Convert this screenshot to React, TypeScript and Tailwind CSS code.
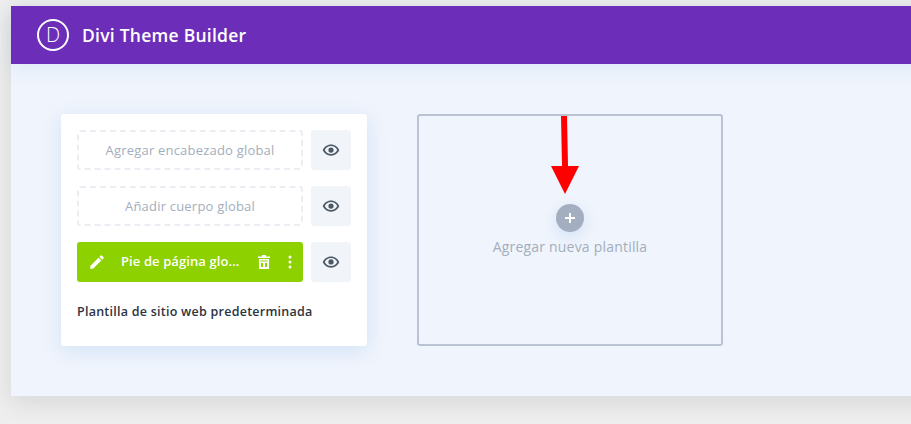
function Eye() {
  return (
    <svg width="18" height="18" viewBox="0 0 24 24" fill="#4c5866">
      <path d="M12 4.500C7 4.500 2.730 7.610 1 12c1.730 4.390 6 7.500 11 7.500s9.270-3.110 11-7.500c-1.730-4.390-6-7.500-11-7.500zM12 17.300c-3.500 0-6.700-2-8.300-5.300C5.300 8.700 8.500 6.700 12 6.700s6.700 2 8.300 5.300c-1.600 3.300-4.800 5.300-8.300 5.300zm0-8.800a3.500 3.500 0 1 0 0 7 3.500 3.500 0 0 0 0-7z" />
    </svg>
  )
}

function EyeButton() {
  return (
    <div className="flex h-10 w-10 items-center justify-center rounded-[3px] bg-[#f1f5f9]">
      <Eye />
    </div>
  )
}

function EmptySlot({ label }: { label: string }) {
  return (
    <div className="flex items-center gap-2">
      <div className="flex h-10 w-[226px] items-center justify-center rounded-[3px] border-2 border-dashed border-[#eaedf2] pt-[1px] text-[13px] font-medium tracking-[0.2px] text-[#a3aebc]">
        {label}
      </div>
      <EyeButton />
    </div>
  )
}

export default function App() {
  return (
    <div className="relative h-[424px] w-[911px] overflow-hidden bg-[#eeeeee] pt-[6px] pl-[11px] font-['Open_Sans',sans-serif]">
      <div className="h-[390px] w-[920px] rounded-tl-[3px] bg-[#f0f4fc] shadow-[0_6px_24px_rgba(0,0,0,0.1)]">
        <header className="flex h-[58px] items-center gap-[13px] bg-[#6c2eb9] pl-[26px] text-white shadow-[0_4px_20px_rgba(43,135,218,0.1)]">
          <div className="flex h-8 w-8 items-center justify-center rounded-full border-2 border-white text-[20px] leading-none font-light">
            D
          </div>
          <span className="text-[17.500px] font-semibold tracking-[0.25px]">Divi Theme Builder</span>
        </header>

        <div className="flex gap-[50px] pt-[50px] pl-[50px]">
          <div className="flex h-[232px] w-[306px] flex-col gap-4 rounded-[3px] bg-white p-4 shadow-[0_5px_20px_rgba(43,135,218,0.15)]">
            <EmptySlot label="Agregar encabezado global" />
            <EmptySlot label="Añadir cuerpo global" />
            <div className="flex items-center gap-2">
              <div className="flex h-10 w-[226px] items-center rounded-[3px] bg-[#8ed100] pr-[11px] pl-[11px] text-white">
                <svg width="18" height="18" viewBox="0 0 24 24" fill="#fff">
                  <path d="M3 17.250V21h3.750L17.810 9.940l-3.750-3.750L3 17.250zM20.710 7.040a1 1 0 0 0 0-1.410l-2.340-2.340a1 1 0 0 0-1.410 0l-1.830 1.830 3.750 3.750 1.830-1.830z" />
                </svg>
                <span className="ml-[15px] text-[13px] font-semibold tracking-[0.1px]">Pie de página glo...</span>
                <svg className="ml-auto" width="14" height="14" viewBox="0 0 14 14" fill="#fff">
                  <path d="M5 0h4v1.500h4V3H1V1.500h4zM2 4h10v10H2zm2 4v4h2V8zm4 0v4h2V8zM3.500 5.500v1h7v-1z" fillRule="evenodd" />
                </svg>
                <svg className="ml-[17px]" width="4" height="14" viewBox="0 0 4 14" fill="#fff">
                  <circle cx="2" cy="2" r="1.500" />
                  <circle cx="2" cy="7" r="1.500" />
                  <circle cx="2" cy="12" r="1.500" />
                </svg>
              </div>
              <EyeButton />
            </div>
            <p className="mt-[5px] text-[12.500px] font-semibold tracking-[0.25px] text-[#2c3440]">
              Plantilla de sitio web predeterminada
            </p>
          </div>

          <div className="flex h-[232px] w-[306px] flex-col items-center rounded-[3px] border-2 border-[#b9c3d3] pt-[88px]">
            <div className="flex h-7 w-7 items-center justify-center rounded-full bg-[#a3afc0] shadow-[0_5px_15px_rgba(43,135,218,0.15)]">
              <svg width="12" height="12" viewBox="0 0 12 12" fill="#fff">
                <path d="M5 1h2v4h4v2H7v4H5V7H1V5h4z" />
              </svg>
            </div>
            <span className="mt-[4px] text-[14px] font-medium tracking-[0.2px] text-[#a3aebc]">Agregar nueva plantilla</span>
          </div>
        </div>
      </div>

      {/* red annotation arrow on top of the screenshot */}
      <svg className="absolute top-[115px] left-[549px]" width="32" height="80" viewBox="0 0 32 80" fill="#fe0000">
        <path d="M12 1h6l1 50h11L16 79 2 51h11z" />
      </svg>
    </div>
  )
}
